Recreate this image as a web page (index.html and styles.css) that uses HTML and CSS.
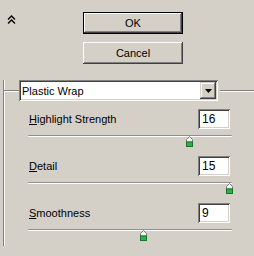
FILE: index.html
```html
<!DOCTYPE html>
<html lang="en">

<head>
    <meta charset="UTF-8">
    <meta name="viewport" content="width=device-width, initial-scale=1.0">
    <title>Plastic Wrap</title>
    <link rel="stylesheet" href="styles.css">
</head>

<body>
    <div class="dialog">
        <div class="top">
            <div class="collapse">
                <svg width="9" height="9" viewBox="0 0 9 9">
                    <polyline points="1,4.5 4.5,1 8,4.5" fill="none" stroke="#000" stroke-width="1.3"/>
                    <polyline points="1,8.5 4.5,5 8,8.5" fill="none" stroke="#000" stroke-width="1.3"/>
                </svg>
            </div>
            <div class="buttons">
                <button class="btn btn-default">OK</button>
                <button class="btn">Cancel</button>
            </div>
        </div>

        <div class="group">
            <div class="group-head">
                <span class="etch etch-short"></span>
                <div class="select">
                    <span class="select-value">Plastic Wrap</span>
                    <span class="select-arrow">
                        <svg width="7" height="4" viewBox="0 0 7 4"><polygon points="0,0 7,0 3.5,4" fill="#000"/></svg>
                    </span>
                </div>
                <span class="etch etch-long"></span>
            </div>

            <div class="params">
                <div class="param">
                    <div class="param-row">
                        <label><u>H</u>ighlight Strength</label>
                        <div class="value-box">16</div>
                    </div>
                    <div class="slider">
                        <div class="track"></div>
                        <!-- 16 of 0..20 -->
                        <svg class="thumb" style="left: 158px" width="7" height="11" viewBox="0 0 7 11">
                            <polygon points="3.5,0.5 6.5,3.5 6.5,6 0.5,6 0.5,3.5" fill="#f4f4f4" stroke="#7a7a7a"/>
                            <rect x="0.5" y="6" width="6" height="4.5" fill="#2fb04a" stroke="#13752a"/>
                        </svg>
                    </div>
                </div>

                <div class="param">
                    <div class="param-row">
                        <label><u>D</u>etail</label>
                        <div class="value-box">15</div>
                    </div>
                    <div class="slider">
                        <div class="track"></div>
                        <!-- 15 of 1..15 -->
                        <svg class="thumb" style="left: 198px" width="7" height="11" viewBox="0 0 7 11">
                            <polygon points="3.5,0.5 6.5,3.5 6.5,6 0.5,6 0.5,3.5" fill="#f4f4f4" stroke="#7a7a7a"/>
                            <rect x="0.5" y="6" width="6" height="4.5" fill="#2fb04a" stroke="#13752a"/>
                        </svg>
                    </div>
                </div>

                <div class="param">
                    <div class="param-row">
                        <label><u>S</u>moothness</label>
                        <div class="value-box">9</div>
                    </div>
                    <div class="slider">
                        <div class="track"></div>
                        <!-- 9 of 1..15 -->
                        <svg class="thumb" style="left: 112px" width="7" height="11" viewBox="0 0 7 11">
                            <polygon points="3.5,0.5 6.5,3.5 6.5,6 0.5,6 0.5,3.5" fill="#f4f4f4" stroke="#7a7a7a"/>
                            <rect x="0.5" y="6" width="6" height="4.5" fill="#2fb04a" stroke="#13752a"/>
                        </svg>
                    </div>
                </div>
            </div>
        </div>
    </div>
</body>

</html>
```

FILE: styles.css
```css
body {
    margin: 0;
    background-color: #d4d0c8;
    font-family: "Liberation Sans", Arial, sans-serif;
    font-size: 11px;
    color: #000;
    overflow: hidden;
    height: 256px;
}

.top {
    display: flex;
    padding-top: 12px;
}

.collapse {
    width: 76px;
    padding: 3px 0 0 7px;
}

.collapse svg {
    display: block;
}

.buttons {
    display: flex;
    flex-direction: column;
    gap: 8px;
    width: 100px;
}

.btn {
    width: 100px;
    height: 22px;
    padding: 0;
    border: none;
    background-color: #d4d0c8;
    font-family: "Liberation Sans", Arial, sans-serif;
    font-size: 11px;
    color: #000;
    box-shadow: inset -1px -1px #404040, inset 1px 1px #fff, inset -2px -2px #808080, inset 2px 2px #d4d0c8;
}

.btn-default {
    border: 1px solid #000;
    box-shadow: inset -1px -1px #404040, inset 1px 1px #fff, inset -2px -2px #808080;
}

/* group box */
.group {
    margin: 26px 0 0 3px;
    border-left: 1px solid #808080;
    box-shadow: inset 1px 0 #fff;
    padding: 0 24px 0 25px;
    height: 166px;
}

.group-head {
    display: flex;
    height: 21px;
    margin: -10px -24px 0 -25px;
}

.etch {
    box-sizing: border-box;
    height: 2px;
    margin-top: 10px;
    border-top: 1px solid #808080;
    border-bottom: 1px solid #fff;
}

.etch-short {
    width: 15px;
}

.etch-long {
    flex: 1;
    margin-left: 2px;
}

.select {
    box-sizing: border-box;
    width: 199px;
    height: 21px;
    padding: 2px;
    display: flex;
    align-items: center;
    background-color: #fff;
    box-shadow: inset 1px 1px #808080, inset -1px -1px #fff, inset 2px 2px #404040, inset -2px -2px #d4d0c8;
}

.select-value {
    padding-left: 1px;
}

.select-arrow {
    margin-left: auto;
    width: 16px;
    height: 17px;
    display: flex;
    align-items: center;
    justify-content: center;
    background-color: #d4d0c8;
    box-shadow: inset -1px -1px #404040, inset 1px 1px #d4d0c8, inset -2px -2px #808080, inset 2px 2px #fff;
}

.select-arrow svg {
    display: block;
    margin-top: 1px;
}

/* parameters */
.params {
    padding-top: 8px;
}

.param-row {
    display: flex;
    justify-content: space-between;
    align-items: center;
    height: 20px;
}

.value-box {
    box-sizing: border-box;
    width: 32px;
    height: 20px;
    padding-left: 4px;
    line-height: 20px;
    font-size: 12px;
    background-color: #fff;
    box-shadow: inset 1px 1px #808080, inset -1px -1px #fff, inset 2px 2px #404040, inset -2px -2px #d4d0c8;
}

.slider {
    position: relative;
    height: 21px;
    margin: 0 -2px 0 -1px;
}

.track {
    box-sizing: border-box;
    margin-top: 6px;
    height: 2px;
    border-top: 1px solid #909090;
    background-color: #fff;
    border-radius: 1px;
}

.thumb {
    position: absolute;
    top: 1px;
    display: block;
}
```
